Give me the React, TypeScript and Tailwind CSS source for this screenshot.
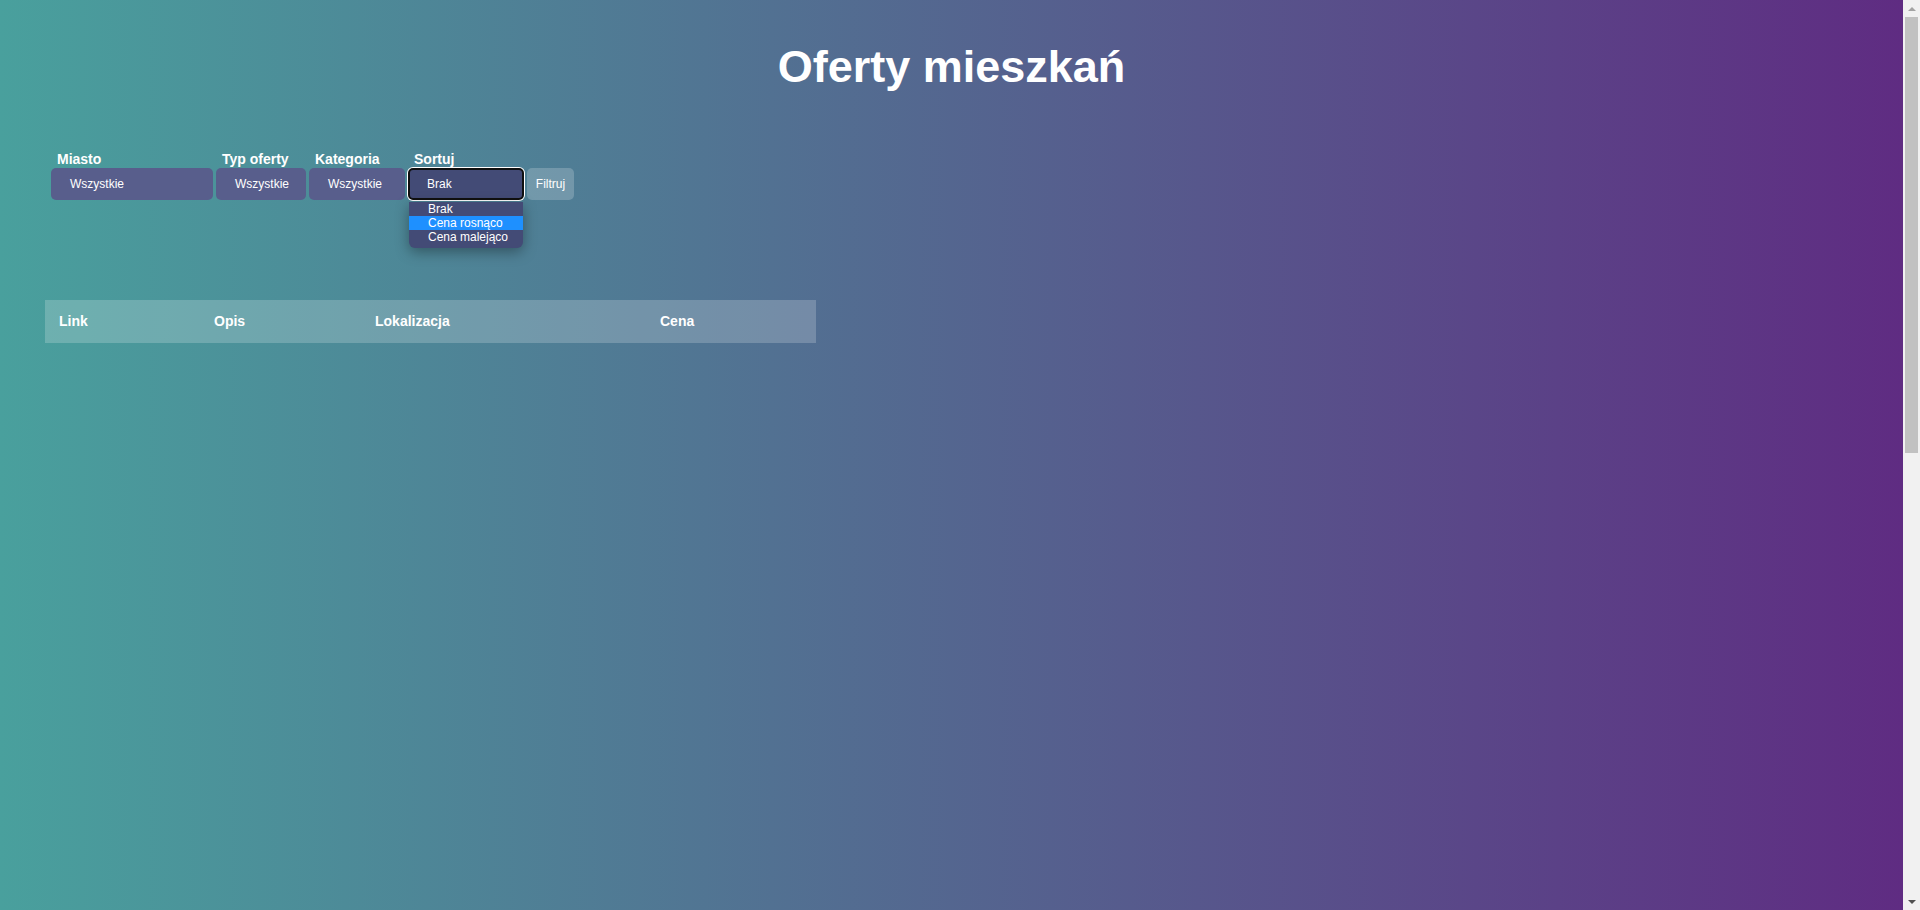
import React from "react";

function FilterSelect({ label, value, width }: { label: string; value: string; width: string }) {
  return (
    <div className="flex flex-col">
      <div className="pl-[6px] text-[14px] font-bold leading-[16px] text-white mb-[1px]">{label}</div>
      <div
        className={`${width} h-[32px] rounded-[5px] bg-[#585e8c] text-white text-[12px] leading-[32px] pl-[19px] whitespace-nowrap`}
      >
        {value}
      </div>
    </div>
  );
}

function Scrollbar() {
  return (
    <div className="w-[17px] h-full flex flex-col bg-[#f1f1f1] shrink-0">
      <div className="h-[17px] flex items-center justify-center shrink-0">
        <div className="w-0 h-0 border-x-[4px] border-x-transparent border-b-[4px] border-b-[#a3a3a3]" />
      </div>
      <div className="flex-1 px-[2px]">
        <div className="h-[436px] bg-[#c1c1c1]" />
      </div>
      <div className="h-[17px] flex items-center justify-center shrink-0">
        <div className="w-0 h-0 border-x-[4px] border-x-transparent border-t-[4px] border-t-[#505050]" />
      </div>
    </div>
  );
}

export default function App() {
  return (
    <div
      className="flex h-[910px] w-full overflow-hidden"
      style={{ fontFamily: '"Liberation Sans", Arial, sans-serif' }}
    >
      <div className="flex-1 h-full bg-[linear-gradient(to_right,#49a09d,#5f2c82)] text-white">
        <h1 className="pt-[41px] text-center text-[45px] font-bold leading-[52px] text-white">Oferty mieszkań</h1>

        <div className="mt-[58px] ml-[51px] flex items-end gap-[3px]">
          <FilterSelect label="Miasto" value="Wszystkie" width="w-[162px]" />
          <FilterSelect label="Typ oferty" value="Wszystkie" width="w-[90px]" />
          <FilterSelect label="Kategoria" value="Wszystkie" width="w-[96px]" />
          <div className="flex flex-col">
            <div className="pl-[6px] text-[14px] font-bold leading-[16px] text-white mb-[1px]">Sortuj</div>
            <div className="relative">
              <div className="w-[116px] h-[32px] rounded-[5px] bg-[#434b76] text-white text-[12px] leading-[28px] pl-[17px] border-2 border-[#101010] shadow-[0_0_0_1px_#ffffff] box-border">
                Brak
              </div>
              <div className="absolute top-[34px] left-[1px] w-[114px] rounded-b-[6px] bg-[#434b76] pb-[4px] shadow-[0_4px_14px_rgba(0,0,0,0.35)] z-10">
                <div className="h-[14px] pl-[19px] text-[12px] leading-[14px] text-white">Brak</div>
                <div className="h-[14px] pl-[19px] text-[12px] leading-[14px] text-white bg-[#1e90ff]">Cena rosnąco</div>
                <div className="h-[14px] pl-[19px] text-[12px] leading-[14px] text-white">Cena malejąco</div>
              </div>
            </div>
          </div>
          <div className="w-[47px] h-[32px] rounded-[5px] bg-white/20 text-white text-[12px] leading-[32px] text-center">
            Filtruj
          </div>
        </div>

        <div className="mt-[100px] ml-[45px] w-[771px]">
          <div className="grid grid-cols-[154px_161px_285px_171px] h-[43px] items-center bg-white/20 text-[14px] font-bold text-white">
            <div className="pl-[14px]">Link</div>
            <div className="pl-[15px]">Opis</div>
            <div className="pl-[15px]">Lokalizacja</div>
            <div className="pl-[15px]">Cena</div>
          </div>
        </div>
      </div>
      <Scrollbar />
    </div>
  );
}
